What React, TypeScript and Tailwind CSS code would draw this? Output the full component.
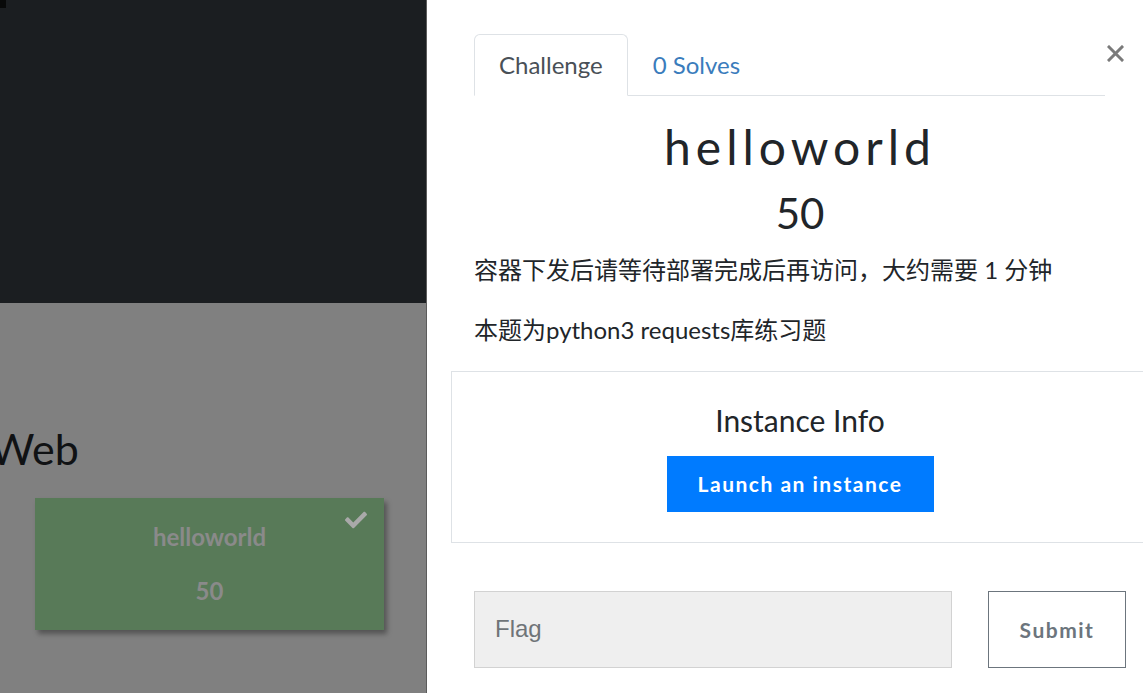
import React from 'react';
import { FaCheck } from 'react-icons/fa';

const lato = { fontFamily: 'Lato, "Noto Sans CJK SC", sans-serif' };

// Page behind the modal, shown through the dark backdrop
const Backdrop: React.FC = () => (
  <div className="flex flex-col h-full w-[426px]">
    <div className="h-[303px] bg-[#1b1e21] shrink-0">
      <div className="w-[6px] h-[8px] bg-[#080909]" />
    </div>
    <div className="flex-1 bg-[#808080] overflow-hidden">
      <h3 className="mt-[120px] -ml-[10px] text-[43px] leading-[1.2] text-[#101214] font-normal">
        Web
      </h3>
      <div className="mt-[23px] ml-[35px] relative w-[349px] h-[132px] bg-[#587a58] shadow-[3px_4px_5px_rgba(0,0,0,0.35)] flex flex-col items-center text-[#8a8a8a] font-bold">
        <FaCheck className="absolute right-[17px] top-[11px] text-[#a9a9a9]" size={22} />
        <span className="mt-[24px] text-[24px] leading-[30px]">helloworld</span>
        <span className="mt-[24px] text-[24px] leading-[30px]">50</span>
      </div>
    </div>
  </div>
);

const ChallengeModal: React.FC = () => (
  <div className="absolute top-0 bottom-0 left-[426px] w-[750px] bg-white border-l border-[#5c5c5c]">
    <div className="ml-[47px] w-[652px] pt-[34px]">
      {/* Tabs */}
      <div className="flex">
        <ul className="flex flex-1 border-b border-[#dee2e6]">
          <li className="-mb-px px-[24px] pt-[12px] pb-[12px] text-[24px] leading-[36px] text-[#495057] bg-white border border-[#dee2e6] border-b-white rounded-t-[6px]">
            Challenge
          </li>
          <li className="px-[25px] pt-[13px] pb-[11px] text-[24px] leading-[36px] text-[#3a7cbc]">0 Solves</li>
        </ul>
        <button className="w-[21px] h-[61px] flex items-start pt-[11px] justify-center" aria-label="Close">
          <svg width="17" height="17" viewBox="0 0 17 17">
            <path d="M2 2 L15 15 M15 2 L2 15" stroke="#7a7a7a" strokeWidth="3" strokeLinecap="square" />
          </svg>
        </button>
      </div>

      {/* Title */}
      <h2 className="mt-[22px] text-center text-[48px] leading-[1.2] tracking-[5px] text-[#212529] font-normal">
        helloworld
      </h2>
      <h3 className="mt-[12px] text-center text-[42px] leading-[1.2] text-[#212529] font-normal">50</h3>

      <div className="mt-[14px] text-[24px] leading-[36px] text-[#212529]">
        <p>容器下发后请等待部署完成后再访问，大约需要 1 分钟</p>
        <p className="mt-[24px]">本题为python3 requests库练习题</p>
      </div>

      {/* Instance box */}
      <div className="mt-[23px] -mx-[23px] h-[172px] border border-[#dee2e6] flex flex-col items-center">
        <h4 className="mt-[30px] text-[30px] leading-[36px] text-[#212529] font-normal">Instance Info</h4>
        <button className="mt-[18px] w-[267px] h-[56px] bg-[#007bff] text-white font-bold text-[21px] tracking-[1.5px]">
          Launch an instance
        </button>
      </div>

      {/* Flag submission */}
      <div className="mt-[48px] flex gap-[36px]">
        <div className="w-[478px] h-[77px] bg-[#efefef] border border-[#d2d2d2] flex items-center px-[20px]">
          <span className="text-[24px] text-[#6f7478]" style={{ fontFamily: '"Liberation Sans", Arial, sans-serif' }}>
            Flag
          </span>
        </div>
        <button className="w-[138px] h-[77px] border border-[#6c757d] bg-white text-[#6c757d] font-bold text-[21px] tracking-[1.5px]">
          Submit
        </button>
      </div>
    </div>
  </div>
);

export default function App() {
  return (
    <div className="relative w-[1143px] h-[693px] overflow-hidden" style={lato}>
      <Backdrop />
      <ChallengeModal />
    </div>
  );
}
